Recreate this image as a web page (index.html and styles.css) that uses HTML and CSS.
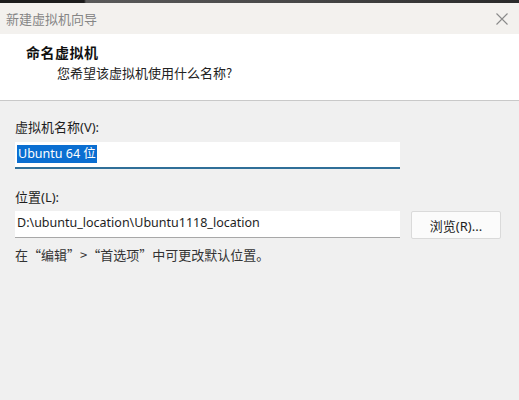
FILE: index.html
```html
<!DOCTYPE html>
<html lang="zh-CN">
<head>
<meta charset="utf-8">
<link rel="stylesheet" href="styles.css">
</head>
<body>
<div class="window">
  <div class="topedge"></div>
  <div class="titlebar">
    <span class="title">新建虚拟机向导</span>
    <svg class="close" width="12" height="12" viewBox="0 0 12 12"><path d="M0.5 0.5 L11.5 11.5 M11.5 0.5 L0.5 11.5" stroke="#8a8a8a" stroke-width="1.1" fill="none"/></svg>
  </div>
  <div class="header">
    <div class="h-title">命名虚拟机</div>
    <div class="h-sub">您希望该虚拟机使用什么名称?</div>
  </div>
  <div class="body">
    <div class="label">虚拟机名称(V):</div>
    <div class="field field-active"><span class="sel">Ubuntu 64 位</span></div>
    <div class="label label2">位置(L):</div>
    <div class="row">
      <div class="field field-loc">D:\ubuntu_location\Ubuntu1118_location</div>
      <div class="btn">浏览(R)...</div>
    </div>
    <div class="note">在“编辑”&gt;“首选项”中可更改默认位置。</div>
  </div>
</div>
</body>
</html>
```
FILE: styles.css
```css
html, body {
  margin: 0;
  padding: 0;
}
body {
  width: 519px;
  height: 400px;
  overflow: hidden;
  background: #f0f0f0;
  font-family: "Noto Sans", "Noto Sans CJK SC", sans-serif;
  font-size: 13px;
  color: #1e1e1e;
}
.window {
  display: flex;
  flex-direction: column;
  height: 400px;
}
.topedge {
  height: 3px;
  background: linear-gradient(to right, #1c1c1c 0, #1c1c1c 84px, #5a5a5a 86px, #474747 300px, #2a2a2a 519px);
}
.titlebar {
  height: 31px;
  background: #f3f1ee;
  display: flex;
  align-items: center;
  justify-content: space-between;
  padding: 0 11px 0 6px;
}
.title {
  font-family: "Noto Sans CJK SC", sans-serif;
  font-size: 13px;
  color: #868686;
}
.close {
  display: block;
}
.header {
  background: #ffffff;
  height: 66px;
  border-bottom: 1px solid #c9c9c9;
  padding: 0 0 0 26px;
  display: flex;
  flex-direction: column;
}
.h-title {
  font-family: "Noto Sans CJK SC", serif;
  font-weight: bold;
  font-size: 14px;
  line-height: 18px;
  margin-top: 9px;
  color: #111;
  letter-spacing: 0.5px;
}
.h-sub {
  font-family: "Noto Sans CJK SC", serif;
  font-size: 13px;
  line-height: 18px;
  margin-top: 3px;
  padding-left: 31px;
  color: #222;
}
.body {
  padding: 17px 0 0 15px;
  display: flex;
  flex-direction: column;
}
.label {
  font-family: "Noto Sans", "Noto Sans CJK SC", sans-serif;
  line-height: 18px;
  height: 18px;
  margin-bottom: 6px;
}
.label2 {
  margin-top: 19px;
  margin-bottom: 5px;
}
.field {
  width: 385px;
  height: 27px;
  box-sizing: border-box;
  background: #fff;
  display: flex;
  align-items: center;
  padding-left: 2px;
  font-family: "Noto Sans", "Noto Sans CJK SC", sans-serif;
  font-size: 12.5px;
}
.field-active {
  border-bottom: 2px solid #2f6f98;
  padding-bottom: 2px;
}
.field-loc {
  border-bottom: 1px solid #a8a8a8;
  padding-bottom: 4px;
}
.sel {
  background: #0a6ed1;
  color: #fff;
  line-height: 18px;
  padding: 0 1px;
}
.row {
  display: flex;
  gap: 11px;
}
.btn {
  width: 90px;
  height: 28px;
  box-sizing: border-box;
  background: #fbfbfb;
  border: 1px solid #dadada;
  border-radius: 2px;
  display: flex;
  align-items: center;
  justify-content: center;
  font-size: 13px;
}
.note {
  margin-top: 7px;
  line-height: 18px;
  color: #333;
  font-family: "Noto Sans CJK SC", serif;
}
```
